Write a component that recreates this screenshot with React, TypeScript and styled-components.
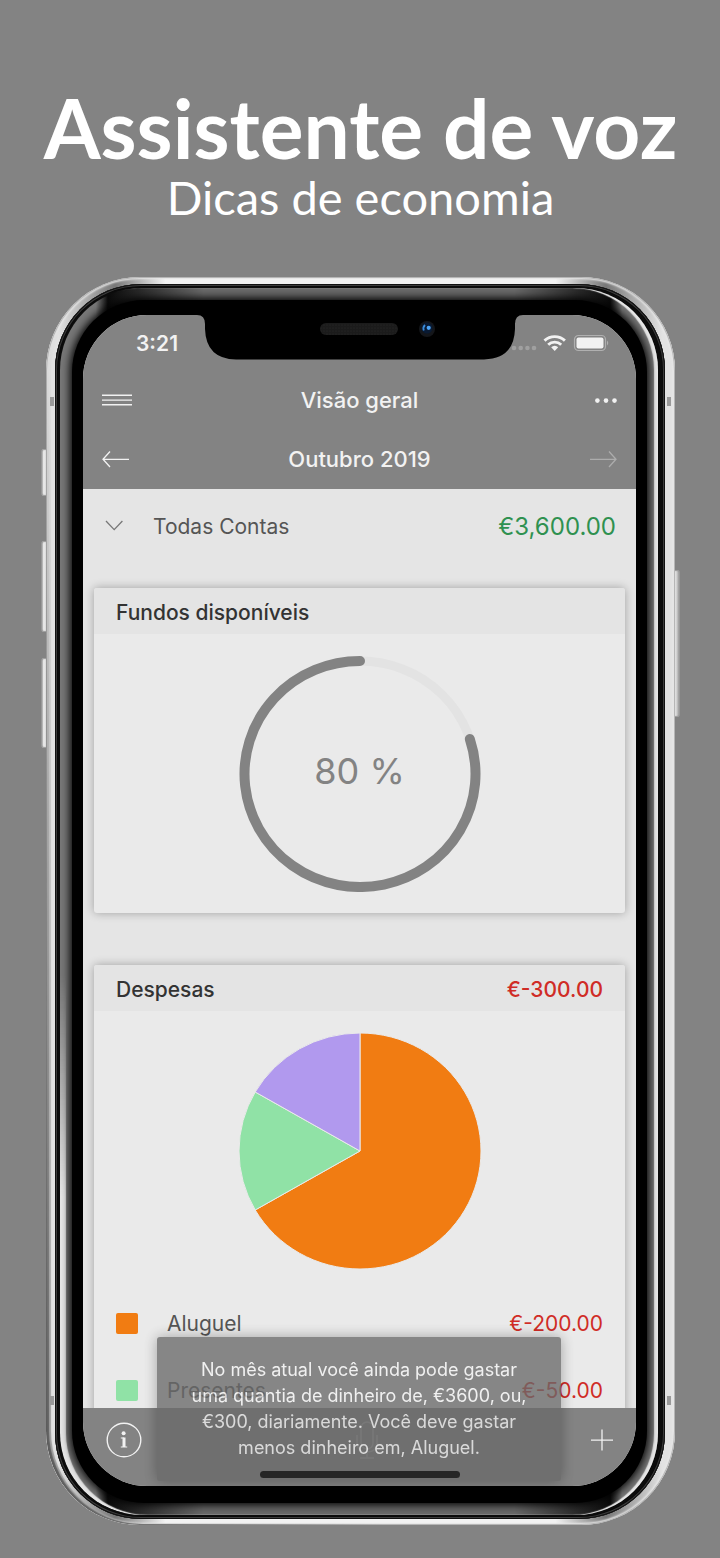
import React from "react";
import styled, { createGlobalStyle } from "styled-components";

const colors = {
  gray: "#838383",
  page: "#e5e5e5",
  card: "#eaeaea",
  light: "#f2f2f2",
  text: "#555",
  dark: "#333",
  green: "#2f9150",
  red: "#d02c26",
  orange: "#f17c12",
  mint: "#90e2a6",
  purple: "#b199ee",
};

interface Expense {
  name: string;
  amount: number;
  color: string;
}

const expenses: Expense[] = [
  { name: "Aluguel", amount: 200, color: colors.orange },
  { name: "Presentes", amount: 50, color: colors.mint },
];

// the last slice is further down the list than the screen shows
const slices = [
  { share: 4 / 6, color: colors.orange },
  { share: 1 / 6, color: colors.mint },
  { share: 1 / 6, color: colors.purple },
];

const RX = 121;
const RY = 118;

const point = (share: number, rx: number, ry: number) => {
  const angle = share * 2 * Math.PI;
  return `${121 + rx * Math.sin(angle)} ${118 - ry * Math.cos(angle)}`;
};

const FundsChart: React.FC<{ percent: number }> = ({ percent }) => {
  const free = 1 - percent / 100;
  return (
    <ChartArea>
      <svg width="242" height="236" viewBox="0 0 242 236" fill="none">
        <ellipse cx="121" cy="118" rx="115.5" ry="113" stroke="#e3e3e3" strokeWidth="9" />
        <path
          d={`M${point(free, 115.5, 113)} A115.5 113 0 1 1 ${point(0, 115.5, 113)}`}
          stroke={colors.gray}
          strokeWidth="10"
          strokeLinecap="round"
        />
      </svg>
      <ChartLabel>{percent} %</ChartLabel>
    </ChartArea>
  );
};

const ExpensesChart: React.FC = () => {
  let start = 0;
  return (
    <ChartArea>
      <svg width="242" height="236" viewBox="0 0 242 236">
        {slices.map(({ share, color }) => {
          const from = start;
          start += share;
          return (
            <path
              key={color}
              d={`M121 118 L${point(from, RX, RY)} A${RX} ${RY} 0 ${share > 0.5 ? 1 : 0} 1 ${point(start, RX, RY)} Z`}
              fill={color}
              stroke={colors.card}
              strokeWidth="1"
            />
          );
        })}
      </svg>
    </ChartArea>
  );
};

const Signal = () => (
  <svg width="98" height="18" viewBox="0 0 98 18">
    <g fill="#a0a0a0">
      <circle cx="3" cy="14" r="2.3" />
      <circle cx="9.7" cy="14" r="2.3" />
      <circle cx="16.4" cy="14" r="2.3" />
      <circle cx="23" cy="14" r="2.3" />
    </g>
    <g fill="none" stroke={colors.light} strokeWidth="2.9">
      <path d="M33.5 6.6 A15 15 0 0 1 53.9 6.6" />
      <path d="M37.2 10.7 A9.4 9.4 0 0 1 50.2 10.7" />
    </g>
    <path d="M40.2 13.2 A4.8 4.8 0 0 1 47.2 13.2 L43.7 16.9 Z" fill={colors.light} />
    <rect x="63.5" y="1.5" width="31" height="15" rx="4" fill="none" stroke="#b0b0b0" strokeWidth="1.2" />
    <rect x="65.5" y="3.5" width="27" height="11" rx="2" fill={colors.light} />
    <path d="M96 6.5 Q98.5 9 96 11.5 Z" fill="#b0b0b0" />
  </svg>
);

const Notch = () => (
  <NotchShape width="326" height="45" viewBox="0 0 326 45">
    <defs>
      <pattern id="mesh" width="3" height="3" patternUnits="userSpaceOnUse">
        <rect width="3" height="3" fill="#1b1b1b" />
        <circle cx="1" cy="1" r="0.6" fill="#2a2a2a" />
      </pattern>
    </defs>
    <path d="M0 0 Q8 0 8 9 V14 Q9 44 39 44.5 H287 Q317 44 318 14 V9 Q318 0 326 0 Z" />
    <rect x="123" y="8" width="78" height="12" rx="6" fill="url(#mesh)" />
    <circle cx="230" cy="14" r="8" fill="#14161a" />
    <circle cx="230" cy="13" r="5.5" fill="#091a33" />
    <path d="M228 10 Q225.5 12.5 226.8 15.5" fill="none" stroke="#3a8ad8" strokeWidth="1.8" />
    <circle cx="231.7" cy="12.8" r="2.1" fill="#4ba3f5" />
  </NotchShape>
);

const App: React.FC = () => {
  return (
    <Page>
      <GlobalStyle />
      <Title>Assistente de voz</Title>
      <Subtitle>Dicas de economia</Subtitle>
      <Phone>
        <SideButton $side="left" $top={172} $height={47} />
        <SideButton $side="left" $top={264} $height={91} />
        <SideButton $side="left" $top={381} $height={90} />
        <SideButton $side="right" $top={293} $height={147} />
        <Chrome>
          <Trim>
            <Bevel>
              <Bezel>
                <Screen>
                  <Header>
                    <StatusBar>
                      <Clock>3:21</Clock>
                      <Signal />
                    </StatusBar>
                    <Bar $height={58}>
                      <IconButton aria-label="Menu">
                        <svg width="30" height="14" viewBox="0 0 30 14" stroke="currentColor" strokeWidth="1.4">
                          <path d="M0 2.3 H30 M0 7.1 H30 M0 11.8 H30" />
                        </svg>
                      </IconButton>
                      <BarTitle>Visão geral</BarTitle>
                      <IconButton aria-label="Mais">
                        <svg width="22" height="14" viewBox="0 0 22 14" fill="currentColor">
                          <circle cx="2.4" cy="7.6" r="2.3" />
                          <circle cx="11" cy="7.6" r="2.3" />
                          <circle cx="19.5" cy="7.6" r="2.3" />
                        </svg>
                      </IconButton>
                    </Bar>
                    <Bar $height={60}>
                      <IconButton aria-label="Mês anterior">
                        <svg width="27" height="18" viewBox="0 0 27 18" fill="none" stroke="currentColor" strokeWidth="1.3">
                          <path d="M27 9.3 H1 M8 1.5 L1 9.3 L8 17" />
                        </svg>
                      </IconButton>
                      <BarTitle>Outubro 2019</BarTitle>
                      <IconButton aria-label="Próximo mês" $muted>
                        <svg width="27" height="18" viewBox="0 0 27 18" fill="none" stroke="currentColor" strokeWidth="1.3">
                          <path d="M0 9.3 H26 M19 1.5 L26 9.3 L19 17" />
                        </svg>
                      </IconButton>
                    </Bar>
                  </Header>

                  <Content>
                    <AccountRow>
                      <svg width="18" height="12" viewBox="0 0 18 12" fill="none" stroke="#777" strokeWidth="1.3">
                        <path d="M1 1 L9.2 9.6 L17.4 1" />
                      </svg>
                      <AccountName>Todas Contas</AccountName>
                      <Balance>€3,600.00</Balance>
                    </AccountRow>

                    <Card>
                      <CardHeader>
                        <CardTitle>Fundos disponíveis</CardTitle>
                      </CardHeader>
                      <FundsChart percent={80} />
                    </Card>

                    <Card>
                      <CardHeader>
                        <CardTitle>Despesas</CardTitle>
                        <Amount $strong>€-300.00</Amount>
                      </CardHeader>
                      <ExpensesChart />
                      <List>
                        {expenses.map(({ name, amount, color }) => (
                          <Item key={name}>
                            <Swatch $color={color} />
                            <ItemName>{name}</ItemName>
                            <Amount>€-{amount.toFixed(2)}</Amount>
                          </Item>
                        ))}
                      </List>
                    </Card>
                  </Content>

                  <Footer>
                    <IconButton aria-label="Informações">
                      <svg width="36" height="36" viewBox="0 0 36 36" fill="none" stroke="currentColor">
                        <circle cx="18" cy="18" r="16.8" strokeWidth="1.4" />
                        <circle cx="17.6" cy="11.2" r="2" fill="currentColor" stroke="none" />
                        <path d="M18 15.4 V25" strokeWidth="3" />
                        <path d="M14.8 16 H18 M14.8 25 H21.2" strokeWidth="1.2" />
                      </svg>
                    </IconButton>
                    <IconButton aria-label="Falar" $muted>
                      <svg width="22" height="38" viewBox="0 0 22 38" fill="none" stroke="currentColor" strokeWidth="1.5">
                        <rect x="5" y="1" width="12" height="27" rx="6" />
                        <path d="M1 14 V21 Q1 31 11 31 Q21 31 21 21 V14 M11 31 V37 M4 37 H18" />
                      </svg>
                    </IconButton>
                    <IconButton aria-label="Adicionar">
                      <svg width="22" height="22" viewBox="0 0 22 22" stroke="currentColor" strokeWidth="1.3">
                        <path d="M0 11.2 H22 M11 0.5 V21.5" />
                      </svg>
                    </IconButton>
                  </Footer>

                  <Notch />
                  <Toast role="status">
                    No mês atual você ainda pode gastar uma quantia de dinheiro de, €3600, ou, €300, diariamente. Você
                    deve gastar menos dinheiro em, Aluguel.
                  </Toast>
                  <HomeIndicator />
                </Screen>
              </Bezel>
            </Bevel>
          </Trim>
          <Antenna $side="left" $edge="top" />
          <Antenna $side="right" $edge="top" />
          <Antenna $side="left" $edge="bottom" />
          <Antenna $side="right" $edge="bottom" />
        </Chrome>
      </Phone>
    </Page>
  );
};

const GlobalStyle = createGlobalStyle`
  * {
    box-sizing: border-box;
  }
  body {
    margin: 0;
    background-color: ${colors.gray};
  }
  svg {
    display: block;
    flex: none;
  }
`;

const Page = styled.main`
  padding: 80px 45px 33px 46px;
  font-family: Inter, "Liberation Sans", sans-serif;
  font-size: 21px;
`;

const Title = styled.h1`
  margin: 0 -20px;
  font: 700 82px/94px Lato, sans-serif;
  color: #fff;
  text-align: center;
  white-space: nowrap;
`;

const Subtitle = styled.p`
  margin: 0 0 57px;
  font: 400 47px/46px Lato, sans-serif;
  color: #fff;
  text-align: center;
`;

const Phone = styled.div`
  position: relative;
`;

const SideButton = styled.span<{ $side: "left" | "right"; $top: number; $height: number }>`
  position: absolute;
  top: ${(p) => p.$top}px;
  ${(p) => p.$side}: -5px;
  width: 9px;
  height: ${(p) => p.$height}px;
  border-radius: 3px;
  background: linear-gradient(90deg, #777, #eee 30%, #d5d5d5 60%, #888);
  box-shadow: inset 0 0 1px 1px #999;
`;

const Chrome = styled.div`
  position: relative;
  padding: 7px 10px 6px 9px;
  border-radius: 94px;
  background: linear-gradient(90deg, #e2e2e2 2%, #777 11%, #f2f2f2 19%, #f2f2f2 81%, #777 89%, #e2e2e2 98%);
  box-shadow: inset 0 0 1px 1px #b0b0b0, inset 0 0 2px 2px #eee;

  &::before {
    content: "";
    position: absolute;
    inset: 0;
    border-radius: inherit;
    box-shadow: inset 2px 0 1px 1px #555, inset 4px 0 1px 1px #999;
    mask-image: linear-gradient(75deg, #000, transparent 35%);
  }
`;

const Trim = styled.div`
  position: relative;
  padding: 4px 7px 4px 5px;
  border-radius: 86px;
  background-color: #0c0c0c;
  box-shadow: inset 0 0 0 1px #111, inset 0 0 0 2px #3c3c3c, inset 0 0 0 3px #0a0a0a;
`;

const Bevel = styled.div`
  position: relative;
  padding: 12px 11px 12px 12px;
  border-radius: 82px;
  background: linear-gradient(90deg, #777 6%, #0a0a0a 8%, #6a6a6a 24%, #6a6a6a 76%, #0a0a0a 92%, #777 94%);
  box-shadow: inset -4px 0 1px #eaeaea;

  &::before {
    content: "";
    position: absolute;
    inset: 0;
    border-radius: inherit;
    box-shadow: inset 6px 0 1px #e6e6e6;
    mask-image: linear-gradient(transparent 56%, #000 74%);
  }
`;

const Bezel = styled.div`
  position: relative;
  padding: 15px 11px 17px;
  border-radius: 72px;
  background-color: #000;
  box-shadow: 0 0 8px 2px #000;
`;

const Screen = styled.div`
  position: relative;
  overflow: hidden;
  border-radius: 64px;
  background-color: ${colors.page};
`;

const Header = styled.header`
  background-color: ${colors.gray};
  color: ${colors.light};
`;

const StatusBar = styled.div`
  height: 56px;
  padding: 0 27px 0 53px;
  display: flex;
  align-items: center;
  justify-content: space-between;
`;

const Clock = styled.span`
  font-weight: 600;
`;

const Bar = styled.div<{ $height: number }>`
  height: ${(p) => p.$height}px;
  padding: 0 19px;
  display: grid;
  grid-template-columns: 30px 1fr 30px;
  align-items: center;

  & > :last-child {
    justify-self: end;
  }
`;

const BarTitle = styled.h2`
  margin: 0;
  font-size: 22px;
  font-weight: 500;
  text-align: center;
`;

const IconButton = styled.button<{ $muted?: boolean }>`
  padding: 0;
  border: 0;
  background-color: transparent;
  color: ${(p) => (p.$muted ? "#acacac" : colors.light)};
`;

const Content = styled.div`
  padding: 0 11px;
`;

const AccountRow = styled.div`
  height: 74px;
  margin-bottom: 25px;
  padding: 0 9px 0 11px;
  display: flex;
  align-items: center;
`;

const AccountName = styled.span`
  flex: 1;
  padding-left: 30px;
  color: ${colors.text};
`;

const Balance = styled.span`
  font-size: 24px;
  color: ${colors.green};
`;

const Card = styled.section`
  margin-bottom: 52px;
  border-radius: 3px;
  background-color: ${colors.card};
  box-shadow: 0 0 10px rgba(0, 0, 0, 0.3);

  &:last-child {
    margin-bottom: 0;
  }
`;

const CardHeader = styled.div`
  height: 46px;
  padding: 2px 22px 0;
  display: flex;
  align-items: center;
  justify-content: space-between;
  border-radius: 3px 3px 0 0;
  background-color: #e4e4e4;
`;

const CardTitle = styled.h3`
  margin: 0;
  font-size: 21px;
  font-weight: 500;
  color: ${colors.dark};
`;

const Amount = styled.span<{ $strong?: boolean }>`
  font-weight: ${(p) => (p.$strong ? 500 : 400)};
  color: ${colors.red};
`;

const ChartArea = styled.div`
  height: 279px;
  padding-top: 22px;
  display: grid;
  justify-content: center;
  align-content: start;

  & > * {
    grid-area: 1 / 1;
  }
`;

const ChartLabel = styled.span`
  place-self: center;
  padding-bottom: 6px;
  font-size: 36px;
  color: ${colors.gray};
`;

const List = styled.ul`
  margin: 0;
  padding: 0 22px;
  list-style: none;
`;

const Item = styled.li`
  height: 67px;
  display: flex;
  align-items: center;
`;

const Swatch = styled.span<{ $color: string }>`
  width: 22px;
  height: 21px;
  border-radius: 2px;
  background-color: ${(p) => p.$color};
`;

const ItemName = styled.span`
  flex: 1;
  padding-left: 29px;
  color: ${colors.text};
`;

// pulled up over the end of the scrolled list
const Footer = styled.footer`
  position: relative;
  height: 78px;
  margin-top: -16px;
  padding: 0 23px 14px;
  display: flex;
  align-items: center;
  justify-content: space-between;
  background-color: ${colors.gray};
`;

const NotchShape = styled.svg`
  position: absolute;
  top: 0;
  left: calc(50% - 163px);
`;

const Toast = styled.div`
  position: absolute;
  bottom: 5px;
  left: 74px;
  right: 75px;
  padding: 20px 26px;
  border-radius: 3px;
  background-color: #6a6a6a;
  box-shadow: 0 0 14px rgba(0, 0, 0, 0.4);
  color: ${colors.light};
  font-size: 18px;
  line-height: 26px;
  text-align: center;
  opacity: 0.78;
`;

const HomeIndicator = styled.span`
  position: absolute;
  bottom: 8px;
  left: calc(50% - 100px);
  width: 200px;
  height: 7px;
  border-radius: 4px;
  background-color: #262626;
`;

const Antenna = styled.span<{ $side: "left" | "right"; $edge: "top" | "bottom" }>`
  position: absolute;
  ${(p) => p.$edge}: 120px;
  ${(p) => p.$side}: 4px;
  width: 4px;
  height: 9px;
  background-color: #999;
`;

export default App;
